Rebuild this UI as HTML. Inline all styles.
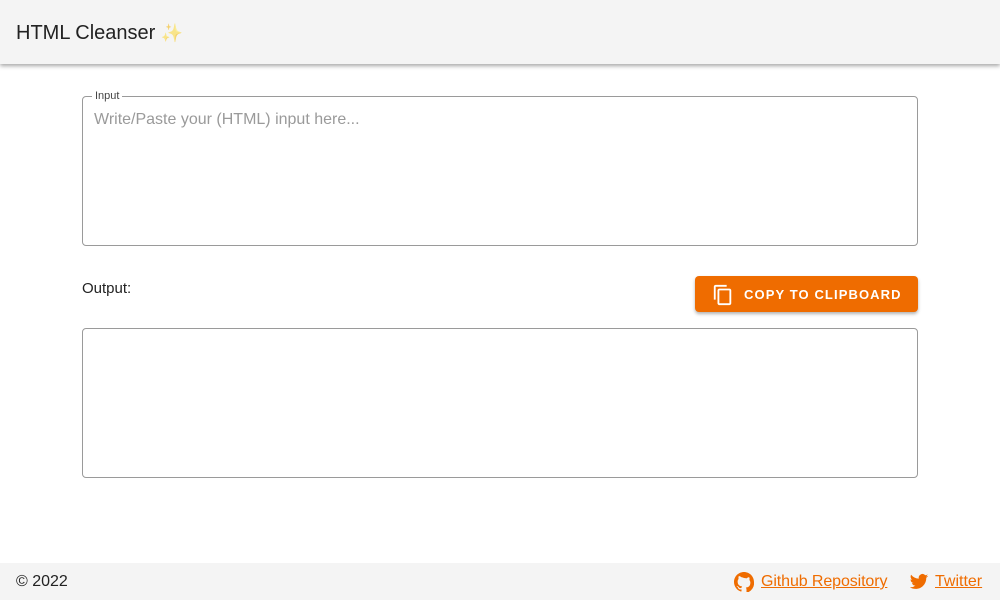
<!DOCTYPE html>
<html><head><meta charset="utf-8"><style>
*{box-sizing:border-box}
body{margin:0;width:1000px;height:600px;background:#fff;font-family:"Liberation Sans",Roboto,sans-serif;position:relative;overflow:hidden}
.hdr{position:absolute;left:0;top:0;width:1000px;height:64px;background:#f4f4f4;box-shadow:0 2px 4px rgba(0,0,0,.35)}
.hdr span{position:absolute;left:16px;top:22px;font-size:20px;color:#222}
.box{position:absolute;left:82px;width:836px;height:150px;border:1px solid #9a9a9a;border-radius:4px}
.lab{position:absolute;left:9px;top:-7px;background:#fff;padding:0 3px;font-size:11px;color:#444}
.ph{position:absolute;left:11px;top:14px;font-size:16px;color:#9a9a9a}
.out{position:absolute;left:82px;top:280px;font-size:15px;color:#222}
.btn{position:absolute;left:695px;top:276px;width:223px;height:36px;background:#ef6c00;border-radius:4px;box-shadow:0 2px 3px rgba(0,0,0,.3);color:#fff;font-size:13px;letter-spacing:1.1px;font-weight:bold}
.btn span{position:absolute;left:49px;top:11px}
.ft{position:absolute;left:0;top:563px;width:1000px;height:37px;background:#f4f4f4;font-size:16px}
.ft a{color:#ef6c00;text-decoration:underline;position:absolute;top:10px}
</style></head><body>
<div class="hdr"><span>HTML Cleanser <span style="position:static;color:#f4c430;opacity:.55;font-size:18px">✨</span></span></div>
<div class="box" style="top:96px"><div class="lab">Input</div><div class="ph">Write/Paste your (HTML) input here...</div></div>
<div class="out">Output:</div>
<div class="btn"><svg style="position:absolute;left:17px;top:8px" width="22" height="22" viewBox="0 0 24 24"><path fill="#fff" d="M16 1H4c-1.1 0-2 .9-2 2v14h2V3h12V1zm3 4H8c-1.1 0-2 .9-2 2v14c0 1.1.9 2 2 2h11c1.1 0 2-.9 2-2V7c0-1.1-.9-2-2-2zm0 16H8V7h11v14z"/></svg><span>COPY TO CLIPBOARD</span></div>
<div class="box" style="top:328px"></div>
<div class="ft"><span style="position:absolute;left:16px;top:10px;color:#222">© 2022</span>
<svg style="position:absolute;left:734px;top:9px" width="20" height="20" viewBox="0 0 16 16"><path fill="#ef6c00" d="M8 0C3.58 0 0 3.58 0 8c0 3.54 2.29 6.53 5.47 7.59.4.07.55-.17.55-.38v-1.33c-2.23.48-2.7-1.07-2.7-1.07-.36-.92-.89-1.17-.89-1.17-.73-.5.05-.49.05-.49.8.06 1.23.83 1.23.83.71 1.22 1.87.87 2.33.66.07-.52.28-.87.51-1.07-1.78-.2-3.65-.89-3.65-3.95 0-.87.31-1.59.82-2.15-.08-.2-.36-1.02.08-2.12 0 0 .67-.21 2.2.82A7.6 7.6 0 0 1 8 4.8c.68 0 1.36.09 2 .27 1.53-1.04 2.2-.82 2.2-.82.44 1.1.16 1.92.08 2.12.51.56.82 1.27.82 2.15 0 3.07-1.87 3.75-3.65 3.95.29.25.54.73.54 1.48v2.2c0 .21.15.46.55.38A8 8 0 0 0 16 8c0-4.42-3.58-8-8-8z"/></svg>
<a style="left:761px;letter-spacing:-.1px">Github Repository</a>
<svg style="position:absolute;left:908px;top:9px" width="22" height="20" viewBox="0 0 24 24"><path fill="#ef6c00" d="M23 4.6a9 9 0 0 1-2.6.7 4.5 4.5 0 0 0 2-2.5 9 9 0 0 1-2.9 1.1 4.5 4.5 0 0 0-7.7 4.1A12.8 12.8 0 0 1 2.5 3.3a4.5 4.5 0 0 0 1.4 6 4.5 4.5 0 0 1-2-.6v.1a4.5 4.5 0 0 0 3.6 4.4 4.5 4.5 0 0 1-2 .1 4.5 4.5 0 0 0 4.2 3.1A9 9 0 0 1 1 18.3a12.8 12.8 0 0 0 6.9 2c8.3 0 12.8-6.9 12.8-12.8v-.6A9 9 0 0 0 23 4.6z"/></svg>
<a style="left:935px">Twitter</a></div>
</body></html>
